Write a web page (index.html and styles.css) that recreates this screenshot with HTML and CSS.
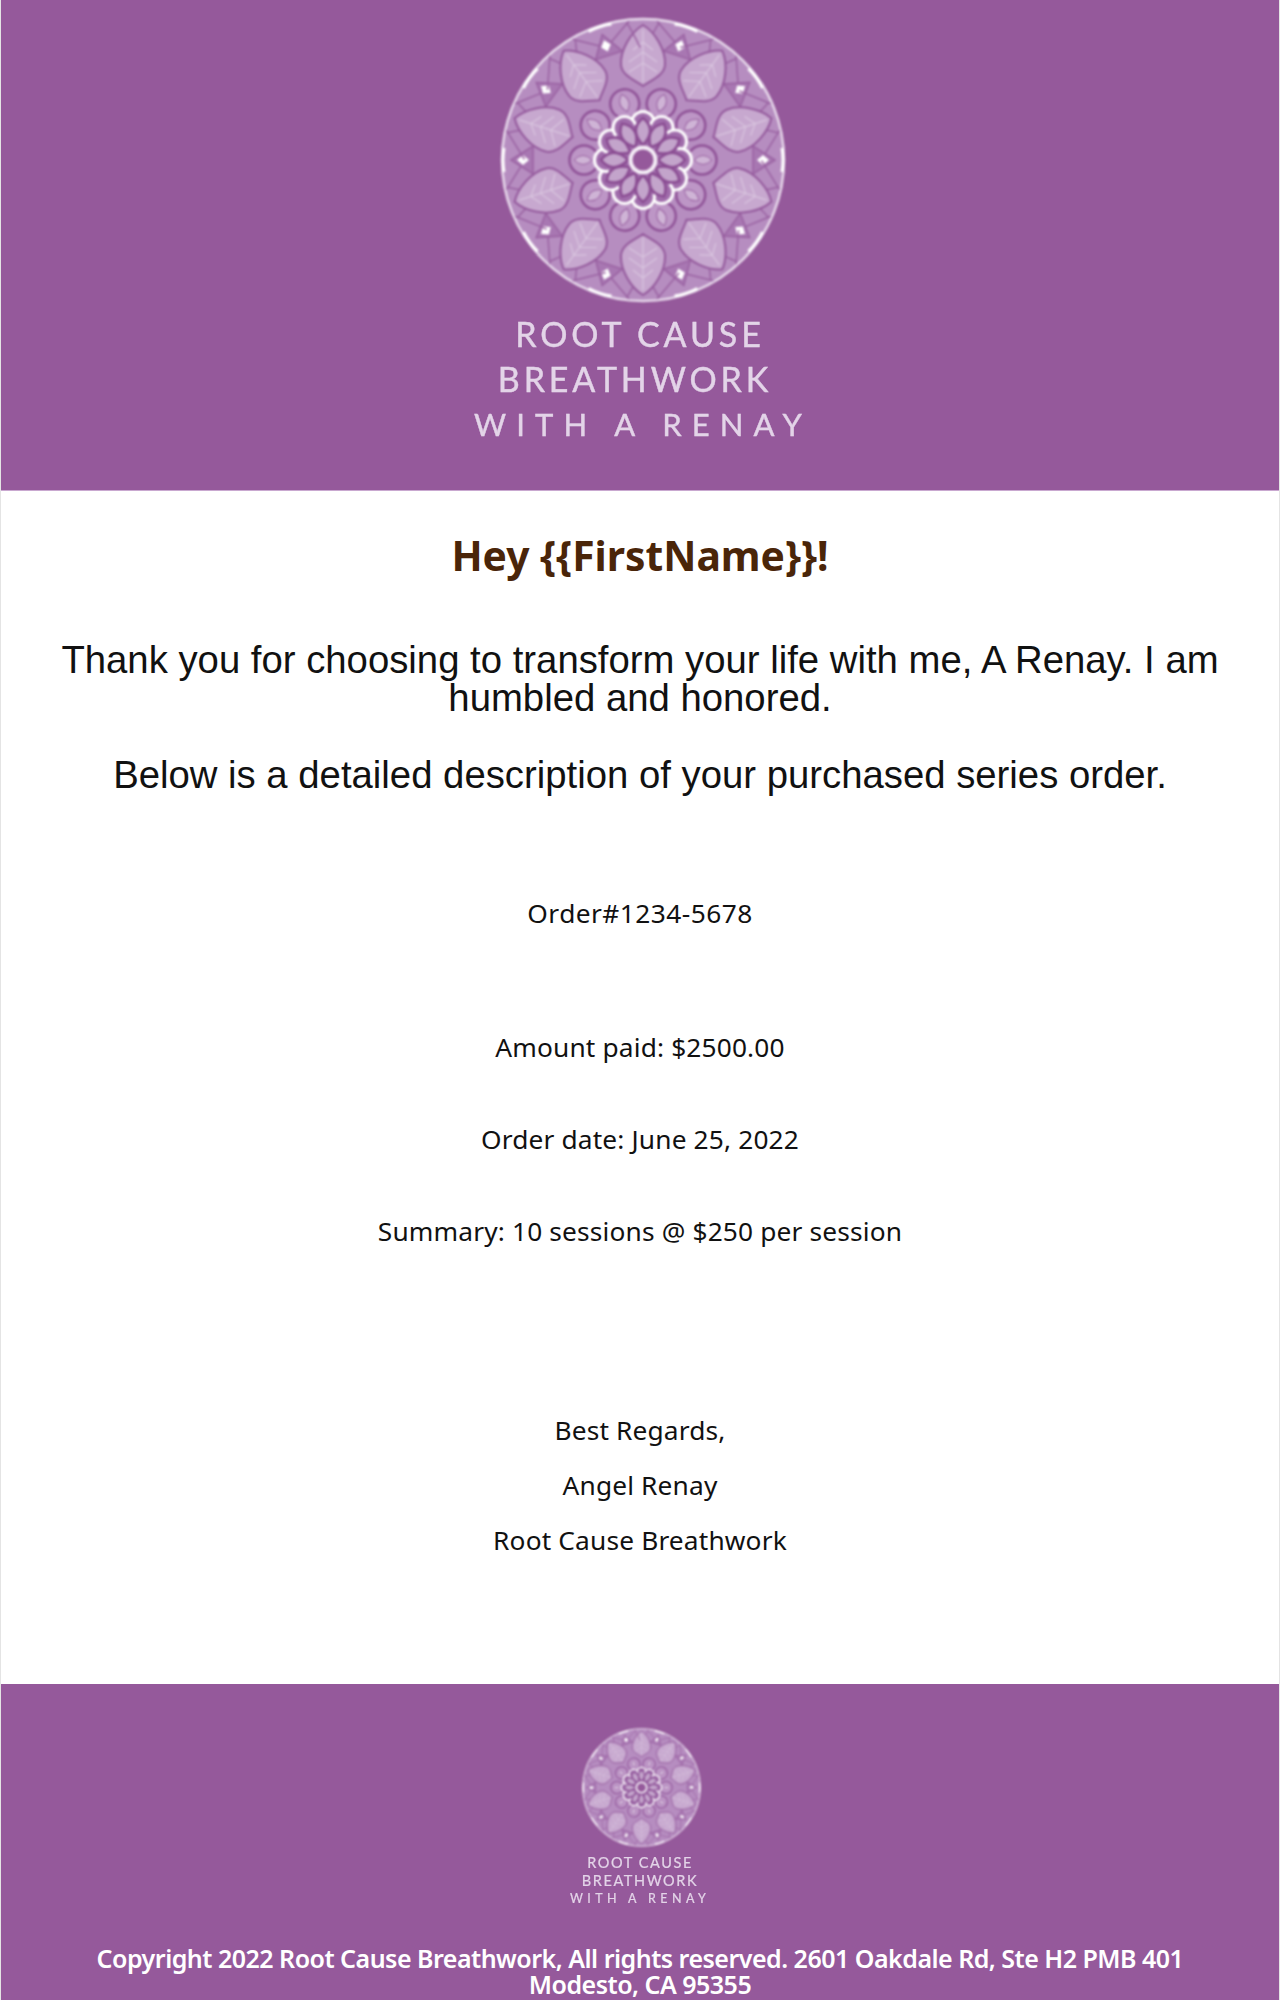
FILE: index.html
```html
<!DOCTYPE html>
<html lang="en">

<head>
    <meta charset="UTF-8">
    <meta name="viewport" content="width=device-width, initial-scale=1.0">
    <title>Root Cause Breathwork - Order Confirmation</title>
    <link rel="stylesheet" href="styles.css">
</head>

<body>
    <div class="email">
        <header class="banner">
            <svg class="mandala" viewBox="-150 -150 300 300" aria-hidden="true">
                <defs>
                    <!-- one tenth of the wheel, turned ten times below -->
                    <g id="sector">
                        <path class="rim-line" d="M-36,-113 L-14,-139 M36,-113 L14,-139" />
                        <path class="rim-line" d="M-32,-108 Q-30,-124 -27,-136 M32,-108 Q30,-124 27,-136" transform="rotate(18)" />
                        <path class="rim-glow" d="M-12,-139 Q0,-141 12,-139" transform="rotate(18)" />
                        <path class="spark-frame" d="M0,-132 L14,-110 L-14,-110 Z" transform="rotate(18)" />
                        <path class="spark" d="M0,-126 L5,-120 L0,-114 L-5,-120 Z" transform="rotate(18)" />
                        <path class="leaf" d="M0,-135 C12,-128 23,-110 22,-95 C21,-84 8,-80 0,-74 C-8,-80 -21,-84 -22,-95 C-23,-110 -12,-128 0,-135 Z" />
                        <path class="vein" d="M0,-130 L0,-78 M0,-118 L-10,-110 M0,-118 L10,-110 M0,-108 L-14,-98 M0,-108 L14,-98 M0,-97 L-14,-88 M0,-97 L14,-88" />
                        <circle class="bud" cx="0" cy="-59" r="14.5" transform="rotate(18)" />
                        <path class="bud-core" d="M0,-69 Q9,-60 0,-51 Q-9,-60 0,-69 Z" transform="rotate(18)" />
                    </g>
                    <g id="lobe">
                        <circle class="lobe" cx="0" cy="-37" r="11.5" />
                    </g>
                    <g id="petal">
                        <path class="petal" d="M0,-42 C10,-34 9,-24 0,-15 C-9,-24 -10,-34 0,-42 Z" />
                    </g>
                    <g id="wheel">
                        <circle class="disc" r="141" />
                        <use href="#sector" />
                        <use href="#sector" transform="rotate(36)" />
                        <use href="#sector" transform="rotate(72)" />
                        <use href="#sector" transform="rotate(108)" />
                        <use href="#sector" transform="rotate(144)" />
                        <use href="#sector" transform="rotate(180)" />
                        <use href="#sector" transform="rotate(216)" />
                        <use href="#sector" transform="rotate(252)" />
                        <use href="#sector" transform="rotate(288)" />
                        <use href="#sector" transform="rotate(324)" />
                        <use href="#lobe" />
                        <use href="#lobe" transform="rotate(30)" />
                        <use href="#lobe" transform="rotate(60)" />
                        <use href="#lobe" transform="rotate(90)" />
                        <use href="#lobe" transform="rotate(120)" />
                        <use href="#lobe" transform="rotate(150)" />
                        <use href="#lobe" transform="rotate(180)" />
                        <use href="#lobe" transform="rotate(210)" />
                        <use href="#lobe" transform="rotate(240)" />
                        <use href="#lobe" transform="rotate(270)" />
                        <use href="#lobe" transform="rotate(300)" />
                        <use href="#lobe" transform="rotate(330)" />
                        <circle class="lobe-fill" r="36" />
                        <use href="#petal" />
                        <use href="#petal" transform="rotate(30)" />
                        <use href="#petal" transform="rotate(60)" />
                        <use href="#petal" transform="rotate(90)" />
                        <use href="#petal" transform="rotate(120)" />
                        <use href="#petal" transform="rotate(150)" />
                        <use href="#petal" transform="rotate(180)" />
                        <use href="#petal" transform="rotate(210)" />
                        <use href="#petal" transform="rotate(240)" />
                        <use href="#petal" transform="rotate(270)" />
                        <use href="#petal" transform="rotate(300)" />
                        <use href="#petal" transform="rotate(330)" />
                        <circle class="eye" r="12.5" />
                    </g>
                </defs>
                <use href="#wheel" />
            </svg>
            <div class="brand">
                <div class="brand-line">ROOT CAUSE</div>
                <div class="brand-line brand-line-shift">BREATHWORK</div>
                <div class="brand-line brand-line-wide">WITH A RENAY</div>
            </div>
        </header>

        <main class="content">
            <h1 class="greeting">Hey {{FirstName}}!</h1>

            <div class="intro">
                <p>Thank you for choosing to transform your life with me, A Renay. I am humbled and honored.</p>
                <p>Below is a detailed description of your purchased series order.</p>
            </div>

            <p class="order-number">Order#1234-5678</p>

            <div class="order-details">
                <p>Amount paid: $2500.00</p>
                <p>Order date: June 25, 2022</p>
                <p>Summary: 10 sessions @ $250 per session</p>
            </div>

            <div class="signature">
                <p>Best Regards,</p>
                <p>Angel Renay</p>
                <p>Root Cause Breathwork</p>
            </div>
        </main>

        <footer class="footer">
            <svg class="mandala mandala-small" viewBox="-150 -150 300 300" aria-hidden="true">
                <use href="#wheel" />
            </svg>
            <div class="brand brand-small">
                <div class="brand-line">ROOT CAUSE</div>
                <div class="brand-line">BREATHWORK</div>
                <div class="brand-line brand-line-wide">WITH A RENAY</div>
            </div>
            <p class="copyright">Copyright 2022 Root Cause Breathwork, All rights reserved. 2601 Oakdale Rd, Ste H2 PMB 401 Modesto, CA 95355</p>
        </footer>
    </div>
</body>

</html>
```

FILE: styles.css
```css
body {
    margin: 0;
    background-color: #fff;
    font-family: "Noto Sans", Arial, sans-serif;
    color: #111;
}

p {
    margin: 0;
}

.email {
    height: 2000px;
    display: flex;
    flex-direction: column;
    overflow: hidden;
    border-left: 1px solid #e4e4e4;
    border-right: 1px solid #e4e4e4;
}

.banner {
    height: 491px;
    flex: none;
    box-sizing: border-box;
    padding-top: 10px;
    background-color: #95599b;
    border-bottom: 1px solid #c9a8d0;
    text-align: center;
}

.mandala {
    display: block;
    width: 300px;
    height: 300px;
    margin: 0 auto;
    padding-left: 5px;
    filter: blur(0.8px);
}

.mandala-small {
    width: 125px;
    height: 125px;
    padding-left: 2px;
    filter: blur(0.8px);
}

.disc {
    fill: #b68dc0;
    stroke: #e6d8ea;
    stroke-width: 2.5;
}

.leaf {
    fill: #c7a8cf;
    stroke: #94599c;
    stroke-width: 2;
}

.vein {
    fill: none;
    stroke: #d9c5df;
    stroke-width: 1.2;
}

.rim-line {
    fill: none;
    stroke: #9a62a2;
    stroke-width: 1.5;
}

.rim-glow {
    fill: none;
    stroke: #fff;
    stroke-width: 3;
}

.spark {
    fill: #fff;
}

.spark-frame {
    fill: #a877b2;
    stroke: #9a62a2;
    stroke-width: 1.5;
}

.bud {
    fill: #bd96c6;
    stroke: #8f5297;
    stroke-width: 2.5;
}

.bud-core {
    fill: #cfb4d6;
    stroke: #9a62a2;
    stroke-width: 1;
}

.lobe {
    fill: #a06cab;
    stroke: #fff;
    stroke-width: 3;
}

.lobe-fill {
    fill: #a06cab;
}

.petal {
    fill: #c3a4cb;
    stroke: #8a4c92;
    stroke-width: 2.5;
}

.eye {
    fill: #95599b;
    stroke: #f4edf6;
    stroke-width: 4;
}

.brand {
    margin-top: 1px;
    color: #e3d4e8;
    font-family: Lato, "Noto Sans", sans-serif;
    font-size: 34px;
    line-height: 45px;
    letter-spacing: 3.9px;
    -webkit-text-stroke: 0.4px #e3d4e8;
    filter: blur(0.5px);
}

.brand-line-shift {
    padding-right: 10px;
}

.brand-line-wide {
    padding-left: 6px;
    font-size: 31px;
    line-height: 47px;
    letter-spacing: 10.1px;
}

.brand-small {
    margin-top: 4px;
    font-size: 14.5px;
    line-height: 18px;
    letter-spacing: 1.6px;
    -webkit-text-stroke: 0.2px #e3d4e8;
}

.brand-small .brand-line-wide {
    padding-left: 0;
    font-size: 12.5px;
    line-height: 18px;
    letter-spacing: 4.4px;
}

.content {
    flex: 1;
    text-align: center;
    font-size: 26.3px;
    letter-spacing: 0.15px;
}

.greeting {
    margin: 39px 0 0;
    color: #4a2509;
    font-size: 40.8px;
    line-height: 50px;
    font-weight: bold;
    letter-spacing: 0;
}

.intro {
    margin-top: 61px;
    padding: 0 40px;
    font-family: "Liberation Sans", Arial, sans-serif;
    font-size: 38.3px;
    line-height: 38px;
    letter-spacing: 0;
    color: #111;
}

.intro p + p {
    margin-top: 39px;
}

.order-number {
    margin-top: 102px;
    line-height: 34px;
    letter-spacing: 0.45px;
}

.order-details {
    margin-top: 100px;
    line-height: 34px;
}

.order-details p + p {
    margin-top: 58px;
}

.signature {
    margin-top: 165px;
    line-height: 34px;
}

.signature p + p {
    margin-top: 21px;
}

.footer {
    height: 316px;
    flex: none;
    box-sizing: border-box;
    padding-top: 41px;
    background-color: #95599b;
    text-align: center;
}

.copyright {
    margin-top: 37px;
    padding: 0 90px;
    color: #fff;
    font-size: 25px;
    line-height: 26px;
    font-weight: 600;
    letter-spacing: -0.51px;
}
```
